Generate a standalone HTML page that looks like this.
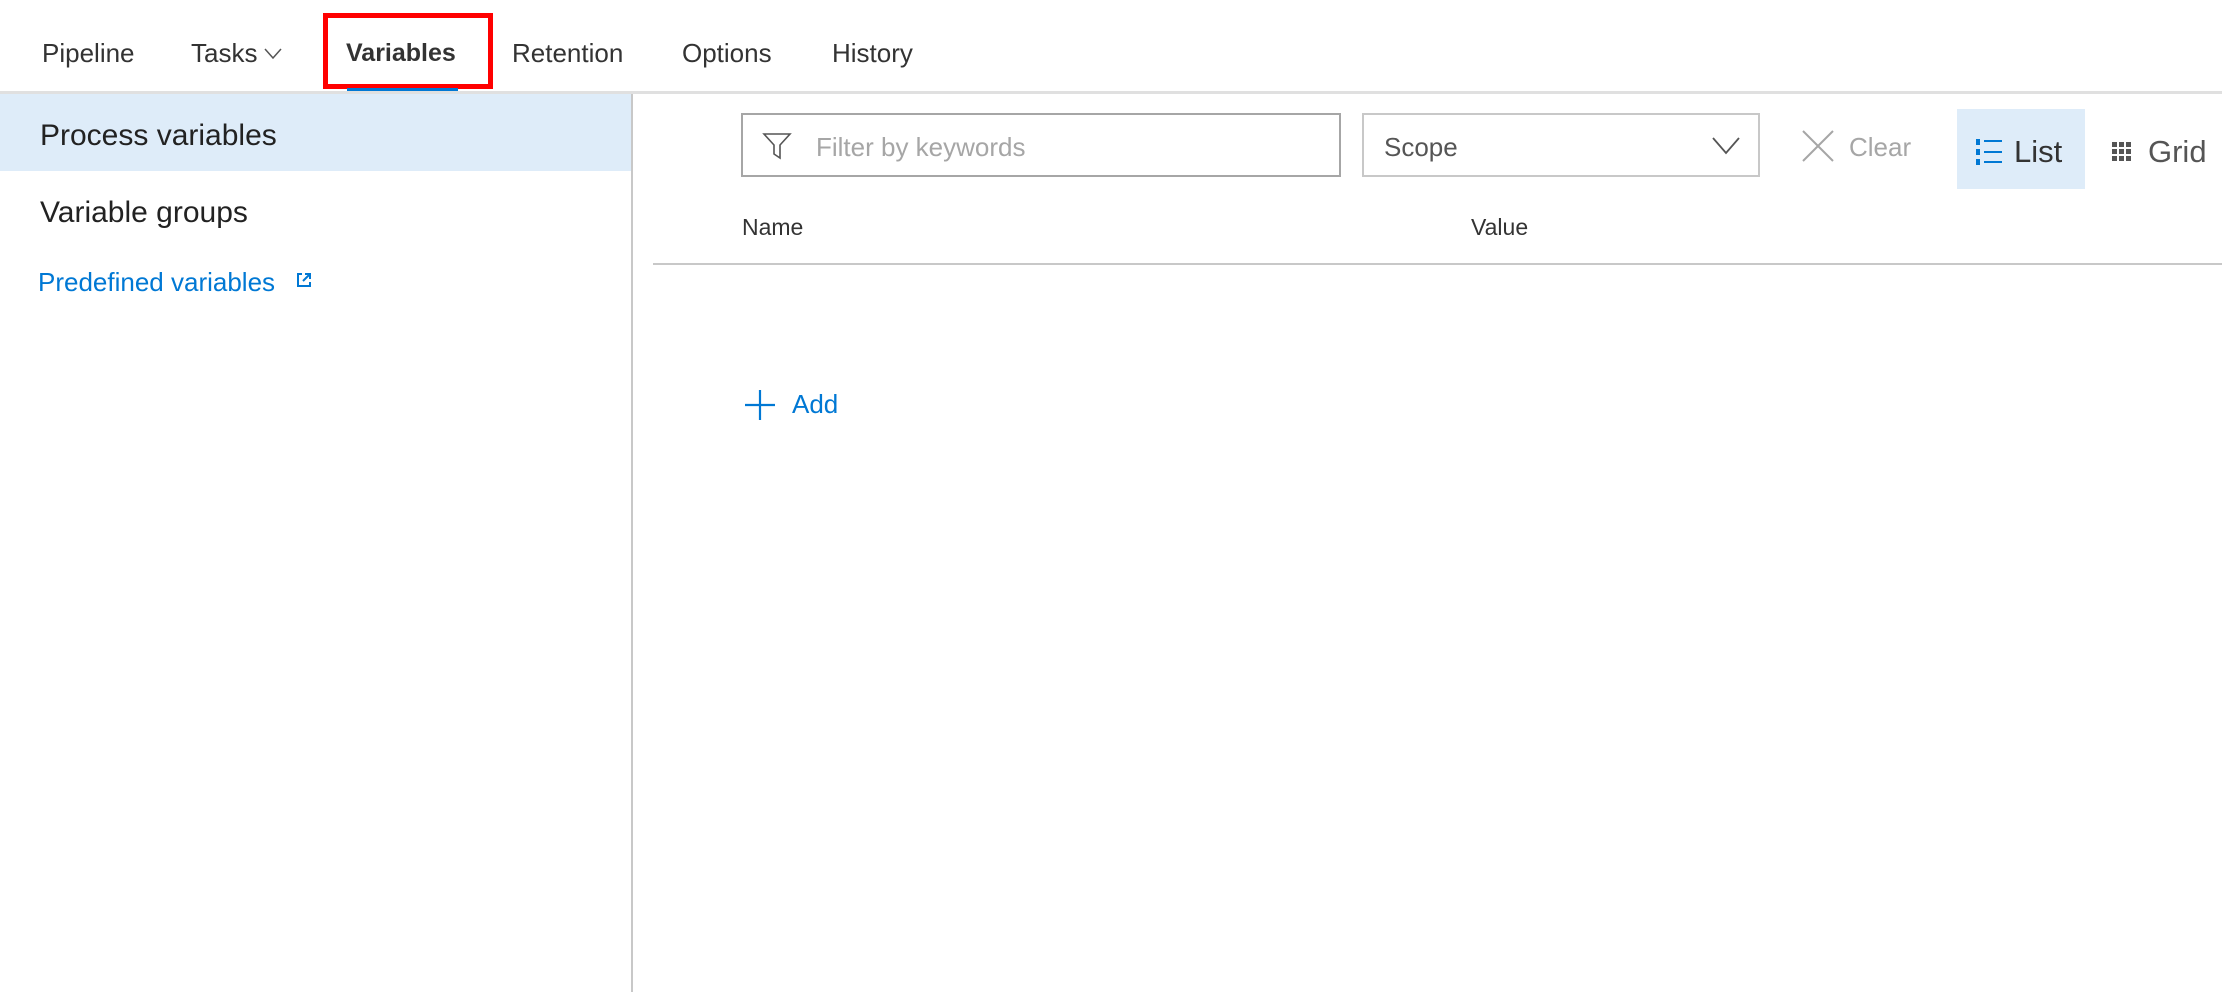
<!DOCTYPE html>
<html><head><meta charset="utf-8"><style>
*{margin:0;padding:0;box-sizing:border-box}
body{width:2222px;height:992px;background:#fff;font-family:"Liberation Sans",sans-serif;color:#333;position:relative;overflow:hidden}
.a{position:absolute;white-space:nowrap}
.nav{font-size:26px;top:38px;color:#333}
</style></head><body>
<div class="a nav" style="left:42px">Pipeline</div>
<div class="a nav" style="left:191px">Tasks</div>
<svg class="a" style="left:264px;top:48px" width="18" height="12"><path d="M1 1 L9 10 L17 1" fill="none" stroke="#555" stroke-width="1.5"/></svg>
<div class="a nav" style="left:346px;font-weight:bold;font-size:25px;top:39px">Variables</div>
<div class="a nav" style="left:512px">Retention</div>
<div class="a nav" style="left:682px">Options</div>
<div class="a nav" style="left:832px">History</div>
<div class="a" style="left:323px;top:13px;width:170px;height:76px;border:5px solid #f00"></div>
<div class="a" style="left:347px;top:88px;width:111px;height:4px;background:#0078d4"></div>
<div class="a" style="left:0;top:91px;width:2222px;height:3px;background:#e0e0e0"></div>
<div class="a" style="left:631px;top:94px;width:2px;height:898px;background:#c8c8c8"></div>
<div class="a" style="left:0;top:94px;width:631px;height:77px;background:#deecf9"></div>
<div class="a" style="left:40px;top:119px;font-size:30px;color:#222">Process variables</div>
<div class="a" style="left:40px;top:196px;font-size:30px;color:#222">Variable groups</div>
<div class="a" style="left:38px;top:267px;font-size:26px;color:#0078d4">Predefined variables</div>
<svg class="a" style="left:296px;top:272px" width="16" height="16"><path d="M6 2H2V14H14V10M9 2H14V7M14 2L7 9" fill="none" stroke="#0078d4" stroke-width="2"/></svg>
<div class="a" style="left:741px;top:113px;width:600px;height:64px;border:2px solid #a6a6a6"></div>
<svg class="a" style="left:762px;top:132px" width="30" height="28"><path d="M2 2H28L18 13V26L12 22V13Z" fill="none" stroke="#555" stroke-width="1.6"/></svg>
<div class="a" style="left:816px;top:132px;font-size:26px;color:#a6a6a6">Filter by keywords</div>
<div class="a" style="left:1362px;top:113px;width:398px;height:64px;border:2px solid #c8c8c8"></div>
<div class="a" style="left:1384px;top:132px;font-size:26px;color:#555">Scope</div>
<svg class="a" style="left:1712px;top:137px" width="28" height="18"><path d="M1 1L14 16L27 1" fill="none" stroke="#555" stroke-width="1.8"/></svg>
<svg class="a" style="left:1801px;top:129px" width="34" height="34"><path d="M2 2L32 32M32 2L2 32" stroke="#a6a6a6" stroke-width="2"/></svg>
<div class="a" style="left:1849px;top:132px;font-size:26px;color:#a6a6a6">Clear</div>
<div class="a" style="left:1957px;top:109px;width:128px;height:80px;background:#deecf9"></div>
<svg class="a" style="left:1975px;top:136px" width="32" height="32"><g fill="#0078d4"><rect x="1" y="3" width="4" height="6"/><rect x="1" y="13" width="4" height="6"/><rect x="1" y="23" width="4" height="6"/><rect x="9" y="4" width="18" height="2"/><rect x="9" y="15" width="18" height="2"/><rect x="9" y="25" width="18" height="2"/></g></svg>
<div class="a" style="left:2014px;top:134px;font-size:31px;color:#333">List</div>
<svg class="a" style="left:2112px;top:142px" width="22" height="22"><g fill="#555"><rect x="0" y="0" width="5" height="5"/><rect x="7" y="0" width="5" height="5"/><rect x="14" y="0" width="5" height="5"/><rect x="0" y="7" width="5" height="5"/><rect x="7" y="7" width="5" height="5"/><rect x="14" y="7" width="5" height="5"/><rect x="0" y="14" width="5" height="5"/><rect x="7" y="14" width="5" height="5"/><rect x="14" y="14" width="5" height="5"/></g></svg>
<div class="a" style="left:2148px;top:134px;font-size:31px;color:#555">Grid</div>
<div class="a" style="left:742px;top:214px;font-size:23px;color:#333">Name</div>
<div class="a" style="left:1471px;top:214px;font-size:23px;color:#333">Value</div>
<div class="a" style="left:653px;top:263px;width:1569px;height:2px;background:#c8c8c8"></div>
<svg class="a" style="left:744px;top:389px" width="32" height="32"><path d="M16 1V31M1 16H31" stroke="#0078d4" stroke-width="2.2"/></svg>
<div class="a" style="left:792px;top:389px;font-size:26px;color:#0078d4">Add</div>
</body></html>
